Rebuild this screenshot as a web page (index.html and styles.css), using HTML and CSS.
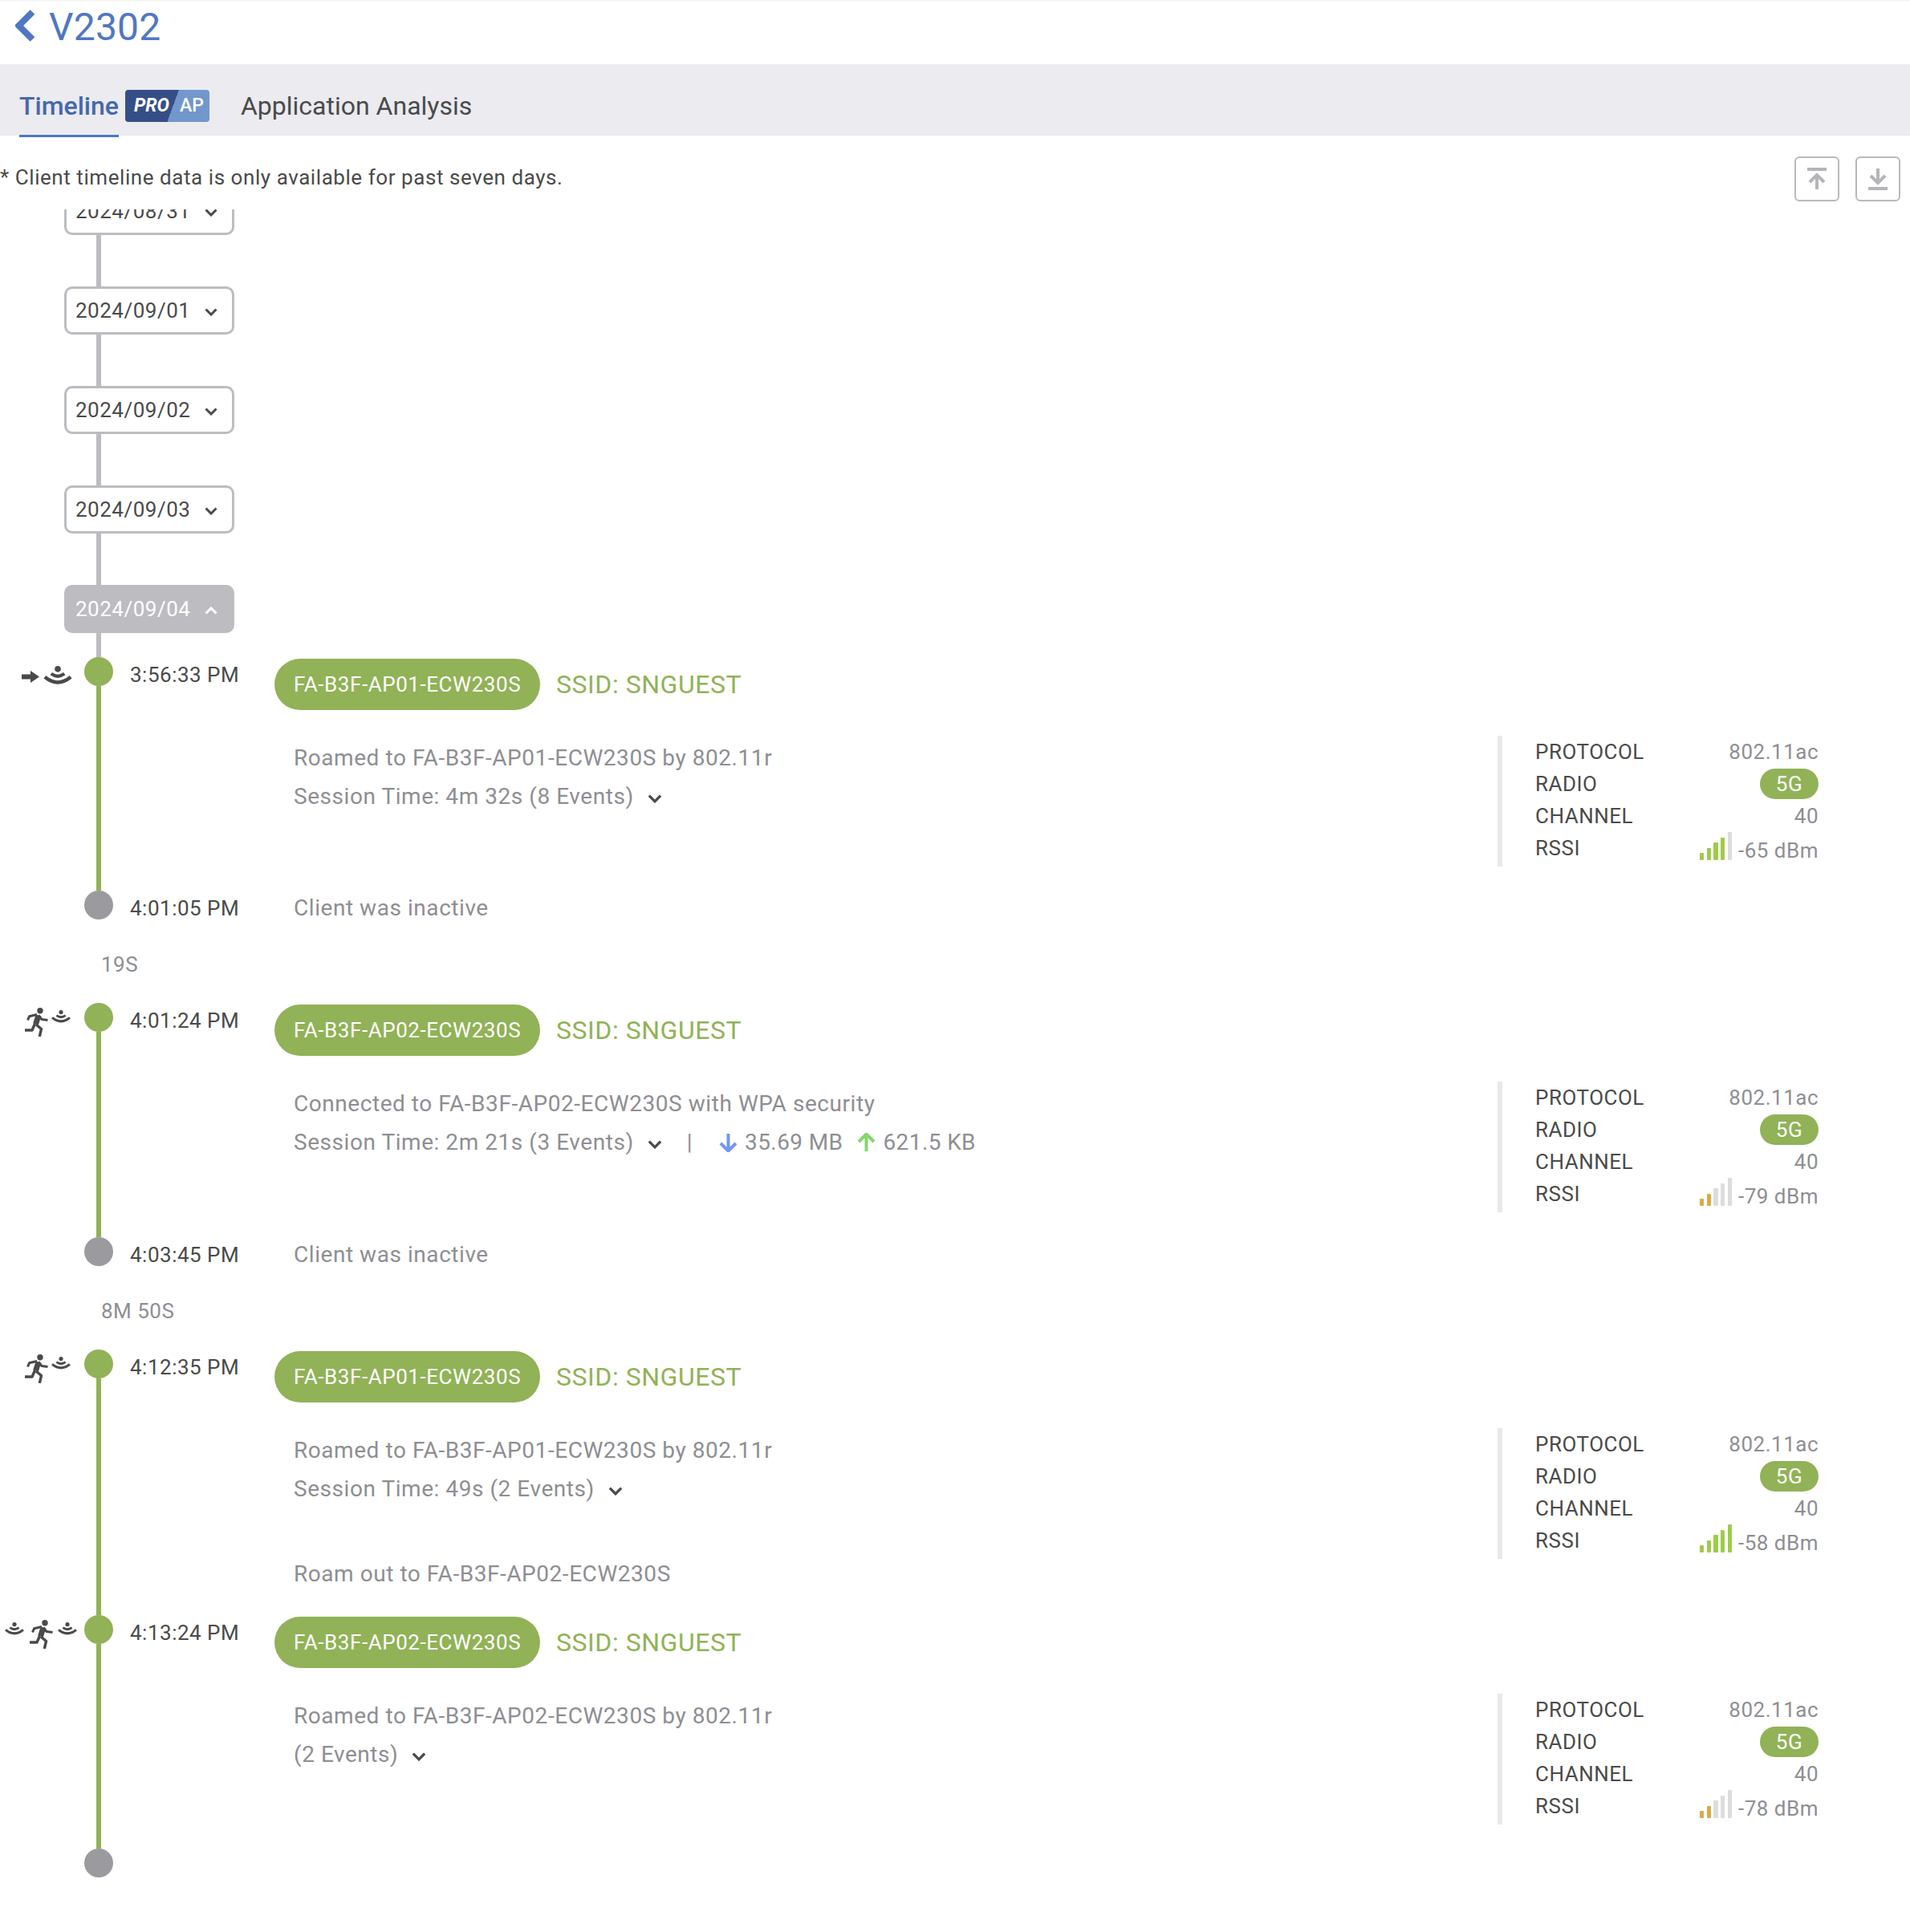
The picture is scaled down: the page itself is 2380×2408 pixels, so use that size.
FILE: index.html
```html
<!DOCTYPE html>
<html lang="en">
<head>
<meta charset="utf-8">
<title>V2302</title>
<link rel="stylesheet" href="styles.css">
</head>
<body>
<svg class="sprites" width="0" height="0" aria-hidden="true">
  <defs>
    <symbol id="wifi" viewBox="0 0 24 17">
      <circle cx="12" cy="2.6" r="2.6" fill="#4a4a4a"/>
      <path d="M6.400 6.600Q12 10.800 17.600 6.600" fill="none" stroke="#4a4a4a" stroke-width="2.800"/>
      <path d="M1 9.400Q12 18.400 23 9.400" fill="none" stroke="#4a4a4a" stroke-width="3"/>
    </symbol>
    <symbol id="run" viewBox="0 0 29 36">
      <circle cx="19" cy="3.700" r="3.700" fill="#4a4a4a"/>
      <g fill="none" stroke="#4a4a4a" stroke-linejoin="round">
        <path d="M17 9.500L13.500 20.500" stroke-width="7"/>
        <path d="M3.500 15.500L5.500 10.800L15 8.500" stroke-width="3"/>
        <path d="M17 9.500L21 14.500L28.500 15.500" stroke-width="3"/>
        <path d="M12.500 20L9 28H0" stroke-width="3.400"/>
        <path d="M14 21L20.500 26.500L18.300 36" stroke-width="3.400"/>
      </g>
    </symbol>
    <symbol id="chev" viewBox="0 0 16 10">
      <path d="M1.500 1.500L8 8l6.500-6.500" fill="none" stroke="currentColor" stroke-width="3"/>
    </symbol>
  </defs>
</svg>

<header class="title-bar">
  <svg class="back" viewBox="0 0 25 40"><path d="M21.500 3L4.500 20l17 17" fill="none" stroke="#4f77c2" stroke-width="8"/></svg>
  <h1 class="title">V2302</h1>
</header>

<nav class="tabs">
  <div class="tab tab-active">Timeline</div>
  <div class="badge"><span class="badge-pro">PRO</span><span class="badge-ap">AP</span></div>
  <div class="tab tab-next">Application Analysis</div>
</nav>

<div class="notice-row">
  <p class="notice">* Client timeline data is only available for past seven days.</p>
  <div class="tools">
    <button class="tool"><svg viewBox="0 0 24 28" class="tool-icon"><path d="M0 2h24" stroke-width="4"/><path d="M12 10v17M3 18l9-9 9 9" stroke-width="4"/></svg></button>
    <button class="tool"><svg viewBox="0 0 24 28" class="tool-icon"><path d="M12 1v17M3 10l9 9 9-9" stroke-width="4"/><path d="M0 26h24" stroke-width="4"/></svg></button>
  </div>
</div>

<main class="scroll">
  <div class="dates">
    <div class="date date-clipped"><span>2024/08/31</span><svg class="chev"><use href="#chev"/></svg></div>
    <div class="connector"></div>
    <div class="date"><span>2024/09/01</span><svg class="chev"><use href="#chev"/></svg></div>
    <div class="connector"></div>
    <div class="date"><span>2024/09/02</span><svg class="chev"><use href="#chev"/></svg></div>
    <div class="connector"></div>
    <div class="date"><span>2024/09/03</span><svg class="chev"><use href="#chev"/></svg></div>
    <div class="connector"></div>
    <div class="date date-open"><span>2024/09/04</span><svg class="chev chev-up"><use href="#chev"/></svg></div>
    <div class="connector connector-short"></div>
  </div>

  <section class="session">
    <div class="icons icons-roam">
      <svg class="arrow" viewBox="0 0 22 15"><path fill="#4a4a4a" d="M0 4.500h11V0l11 7.500L11 15v-4.500H0z"/></svg>
      <svg class="wifi-lg"><use href="#wifi"/></svg>
    </div>
    <div class="rail"><div class="dot"></div><div class="line"></div></div>
    <div class="main">
      <div class="time">3:56:33 PM</div>
      <div class="body">
        <div class="head"><span class="ap">FA-B3F-AP01-ECW230S</span><span class="ssid">SSID: SNGUEST</span></div>
        <div class="details">
          <div class="msgs">
            <div>Roamed to FA-B3F-AP01-ECW230S by 802.11r</div>
            <div class="msg-row"><span>Session Time: 4m 32s (8 Events)</span><svg class="chev chev-dark"><use href="#chev"/></svg></div>
          </div>
          <div class="panel">
            <div class="p-row"><span class="p-key">PROTOCOL</span><span>802.11ac</span></div>
            <div class="p-row"><span class="p-key">RADIO</span><span class="radio">5G</span></div>
            <div class="p-row"><span class="p-key">CHANNEL</span><span>40</span></div>
            <div class="p-row p-rssi"><span class="p-key">RSSI</span><span class="rssi"><span class="bars good"><i class="on"></i><i class="on"></i><i class="on"></i><i class="on"></i><i></i></span><span class="dbm">-65 dBm</span></span></div>
          </div>
        </div>
      </div>
    </div>
  </section>
  <div class="end">
    <div class="end-dot"></div>
    <div class="time">4:01:05 PM</div>
    <div class="end-msg">Client was inactive</div>
  </div>
  <div class="idle">19S</div>

  <section class="session session-tall">
    <div class="icons icons-run">
      <svg class="run"><use href="#run"/></svg>
      <svg class="wifi-sm"><use href="#wifi"/></svg>
    </div>
    <div class="rail"><div class="dot"></div><div class="line"></div></div>
    <div class="main">
      <div class="time">4:01:24 PM</div>
      <div class="body">
        <div class="head"><span class="ap">FA-B3F-AP02-ECW230S</span><span class="ssid">SSID: SNGUEST</span></div>
        <div class="details">
          <div class="msgs">
            <div>Connected to FA-B3F-AP02-ECW230S with WPA security</div>
            <div class="msg-row"><span>Session Time: 2m 21s (3 Events)</span><svg class="chev chev-dark"><use href="#chev"/></svg><span class="sep">|</span>
              <svg class="traffic" viewBox="0 0 25 24"><path d="M12.500 1v21M3 13l9.500 9.500L22 13" fill="none" stroke="#7097f5" stroke-width="4"/></svg><span class="amount">35.69 MB</span>
              <svg class="traffic traffic-up" viewBox="0 0 25 24"><path d="M12.500 23V2M3 11l9.500-9.500L22 11" fill="none" stroke="#85d66a" stroke-width="4"/></svg><span class="amount">621.5 KB</span></div>
          </div>
          <div class="panel">
            <div class="p-row"><span class="p-key">PROTOCOL</span><span>802.11ac</span></div>
            <div class="p-row"><span class="p-key">RADIO</span><span class="radio">5G</span></div>
            <div class="p-row"><span class="p-key">CHANNEL</span><span>40</span></div>
            <div class="p-row p-rssi"><span class="p-key">RSSI</span><span class="rssi"><span class="bars weak"><i class="on"></i><i class="on"></i><i></i><i></i><i></i></span><span class="dbm">-79 dBm</span></span></div>
          </div>
        </div>
      </div>
    </div>
  </section>
  <div class="end">
    <div class="end-dot"></div>
    <div class="time">4:03:45 PM</div>
    <div class="end-msg">Client was inactive</div>
  </div>
  <div class="idle">8M 50S</div>

  <section class="session session-note">
    <div class="icons icons-run">
      <svg class="run"><use href="#run"/></svg>
      <svg class="wifi-sm"><use href="#wifi"/></svg>
    </div>
    <div class="rail"><div class="dot"></div><div class="line"></div></div>
    <div class="main">
      <div class="time">4:12:35 PM</div>
      <div class="body">
        <div class="head"><span class="ap">FA-B3F-AP01-ECW230S</span><span class="ssid">SSID: SNGUEST</span></div>
        <div class="details">
          <div class="msgs">
            <div>Roamed to FA-B3F-AP01-ECW230S by 802.11r</div>
            <div class="msg-row"><span>Session Time: 49s (2 Events)</span><svg class="chev chev-dark"><use href="#chev"/></svg></div>
          </div>
          <div class="panel">
            <div class="p-row"><span class="p-key">PROTOCOL</span><span>802.11ac</span></div>
            <div class="p-row"><span class="p-key">RADIO</span><span class="radio">5G</span></div>
            <div class="p-row"><span class="p-key">CHANNEL</span><span>40</span></div>
            <div class="p-row p-rssi"><span class="p-key">RSSI</span><span class="rssi"><span class="bars good"><i class="on"></i><i class="on"></i><i class="on"></i><i class="on"></i><i class="on"></i></span><span class="dbm">-58 dBm</span></span></div>
          </div>
        </div>
        <div class="note">Roam out to FA-B3F-AP02-ECW230S</div>
      </div>
    </div>
  </section>

  <section class="session">
    <div class="icons icons-between">
      <svg class="wifi-sm"><use href="#wifi"/></svg>
      <svg class="run run-mid"><use href="#run"/></svg>
      <svg class="wifi-sm"><use href="#wifi"/></svg>
    </div>
    <div class="rail"><div class="dot"></div><div class="line"></div></div>
    <div class="main">
      <div class="time">4:13:24 PM</div>
      <div class="body">
        <div class="head"><span class="ap">FA-B3F-AP02-ECW230S</span><span class="ssid">SSID: SNGUEST</span></div>
        <div class="details">
          <div class="msgs">
            <div>Roamed to FA-B3F-AP02-ECW230S by 802.11r</div>
            <div class="msg-row"><span>(2 Events)</span><svg class="chev chev-dark"><use href="#chev"/></svg></div>
          </div>
          <div class="panel">
            <div class="p-row"><span class="p-key">PROTOCOL</span><span>802.11ac</span></div>
            <div class="p-row"><span class="p-key">RADIO</span><span class="radio">5G</span></div>
            <div class="p-row"><span class="p-key">CHANNEL</span><span>40</span></div>
            <div class="p-row p-rssi"><span class="p-key">RSSI</span><span class="rssi"><span class="bars weak"><i class="on"></i><i class="on"></i><i></i><i></i><i></i></span><span class="dbm">-78 dBm</span></span></div>
          </div>
        </div>
      </div>
    </div>
  </section>
  <div class="end">
    <div class="end-dot"></div>
  </div>
</main>
</body>
</html>
```

FILE: styles.css
```css
* { box-sizing: border-box; }
html, body { margin: 0; padding: 0; background: #fff; }
body {
  font-family: Roboto, "Liberation Sans", sans-serif;
  font-size: 26px;
  letter-spacing: 0.5px;
  color: #4a4a4a;
  min-height: 2408px;
}
.sprites { display: block; height: 0; }

.title-bar {
  height: 80px;
  display: flex;
  align-items: flex-start;
  padding: 12px 0 0 19px;
  border-top: 2px solid #f7f7f7;
}
.back { width: 25px; height: 40px; margin-top: -2px; }
.title {
  margin: -8px 0 0 17px;
  font-size: 48px;
  line-height: 56px;
  font-weight: 400;
  letter-spacing: 0.2px;
  color: #4f77c2;
}

.tabs {
  height: 89px;
  background: #ebebf0;
  display: flex;
  align-items: flex-start;
  padding-left: 24px;
}
.tab { font-size: 32px; line-height: 40px; margin-top: 32px; letter-spacing: 0; }
.tab-active {
  color: #4668ad;
  font-weight: 500;
  height: 59px;
  border-bottom: 3px solid #4f77c2;
}
.tab-next { margin-left: 39px; }
.badge {
  width: 105px;
  height: 40px;
  margin: 32px 0 0 8px;
  border-radius: 4px;
  background: linear-gradient(110deg, #354f86 56%, #7297cc 56%);
  color: #fff;
  font-weight: 700;
  font-size: 23px;
  letter-spacing: 0;
  line-height: 40px;
  display: flex;
  padding-left: 11px;
  gap: 13px;
}
.badge-pro { font-style: italic; }
.badge-ap { font-weight: 500; }

.notice-row {
  height: 92px;
  display: flex;
  justify-content: space-between;
  align-items: flex-start;
  padding-right: 12px;
}
.notice { margin: 32px 0 0; line-height: 40px; letter-spacing: 0.56px; }
.tools { display: flex; gap: 20px; margin-top: 26px; }
.tool {
  width: 56px;
  height: 56px;
  padding: 0;
  border: 2.500px solid #b8b8bd;
  border-radius: 6px;
  background: #fff;
  display: flex;
  align-items: center;
  justify-content: center;
}
.tool-icon { width: 24px; height: 28px; fill: none; stroke: #b4b4b9; }

.scroll { overflow: hidden; }

.dates { padding-left: 80px; }
.date {
  width: 212px;
  height: 60px;
  border: 3px solid #bcbcc1;
  border-radius: 10px;
  background: #fff;
  display: flex;
  align-items: center;
  justify-content: space-between;
  padding: 0 18px 0 11px;
}
.date-clipped { margin-top: -28px; }
.date-open { background: #bcbcc1; color: #fff; }
.connector { width: 6px; height: 64px; margin-left: 40px; background: #bcbcc1; }
.connector-short { height: 30px; }
.chev { width: 16px; height: 10px; color: #4a4a4a; flex: none; margin-top: 3px; }
.chev-up { transform: scaleY(-1); color: #fff; }

.session {
  display: grid;
  grid-template-columns: 105px 36px 1fr;
}
.icons { display: flex; align-items: flex-start; }
.icons-roam { padding-left: 27px; }
.icons-run { padding-left: 31px; }
.icons-between { padding-left: 6px; }
.arrow { width: 22px; height: 15px; margin: 17px 0 0 0; }
.wifi-lg { width: 36px; height: 25px; margin: 11px 0 0 5px; }
.wifi-sm { width: 24px; height: 17px; margin-top: 9px; }
.run { width: 29px; height: 36px; margin-top: 6px; margin-right: 4px; }
.run-mid { margin: 6px 6px 0 7px; }

.rail { display: flex; flex-direction: column; align-items: center; }
.dot { width: 36px; height: 36px; border-radius: 50%; background: #91b257; flex: none; }
.line { width: 6px; flex: 1; background: #91b257; }

.main { display: flex; padding-right: 114px; }
.time { width: 201px; flex: none; padding-left: 21px; line-height: 44px; }

.body { flex: 1; padding-bottom: 30px; }
.session-tall .body { padding-bottom: 31px; }
.session-note .body { padding-bottom: 32px; }
.head { display: flex; align-items: center; gap: 20px; margin-top: 2px; }
.ap {
  height: 64px;
  line-height: 64px;
  padding: 0 24px;
  width: 331px;
  border-radius: 32px;
  background: #91b257;
  color: #fff;
  white-space: nowrap;
  letter-spacing: 0.56px;
}
.ssid { font-size: 32px; color: #91b257; letter-spacing: 0.55px; }

.details { display: flex; justify-content: space-between; margin-top: 32px; }
.msgs { padding: 4px 0 0 24px; font-size: 28px; line-height: 48px; letter-spacing: 0.55px; color: #8e8e93; }
.msg-row { display: flex; align-items: center; }
.msg-row .chev { width: 18px; height: 11px; margin: 4px 0 0 17px; color: #4a4a4a; }
.sep { margin-left: 31px; }
.traffic { width: 25px; height: 24px; margin-left: 32px; }
.traffic-up { margin-left: 17px; }
.amount { margin-left: 8px; letter-spacing: 0.4px; }
.note { padding-left: 24px; font-size: 28px; line-height: 38px; letter-spacing: 0.55px; color: #8e8e93; }

.panel {
  width: 400px;
  height: 163px;
  flex: none;
  border-left: 6px solid #e8e8e8;
  padding-left: 41px;
  color: #8e8e93;
  font-size: 26px;
}
.p-row { height: 40px; line-height: 40px; display: flex; justify-content: space-between; align-items: center; }
.p-key { color: #4a4a4a; }
.radio {
  width: 73px;
  height: 38px;
  line-height: 38px;
  border-radius: 19px;
  background: #91b257;
  color: #fff;
  text-align: center;
}
.p-rssi { align-items: flex-start; }
.rssi { display: flex; align-items: flex-start; }
.dbm { margin: 3px 0 0 8px; }
.bars { display: flex; align-items: flex-end; gap: 3.400px; height: 35px; }
.bars i { display: block; width: 5.300px; border-radius: 1px; background: #dcdcdc; }
.bars i:nth-child(1) { height: 8.700px; }
.bars i:nth-child(2) { height: 15px; }
.bars i:nth-child(3) { height: 22px; }
.bars i:nth-child(4) { height: 28px; }
.bars i:nth-child(5) { height: 35px; }
.good i.on { background: #9fcb4a; }
.weak i.on { background: #dcaa45; }

.end { display: flex; height: 36px; padding-left: 105px; }
.end-dot { width: 36px; height: 36px; border-radius: 50%; background: #9b9b9f; flex: none; }
.end-msg { margin-left: 24px; font-size: 28px; line-height: 44px; letter-spacing: 0.55px; color: #8e8e93; }
.idle { height: 104px; padding: 8px 0 0 126px; line-height: 96px; color: #8e8e93; }
```
